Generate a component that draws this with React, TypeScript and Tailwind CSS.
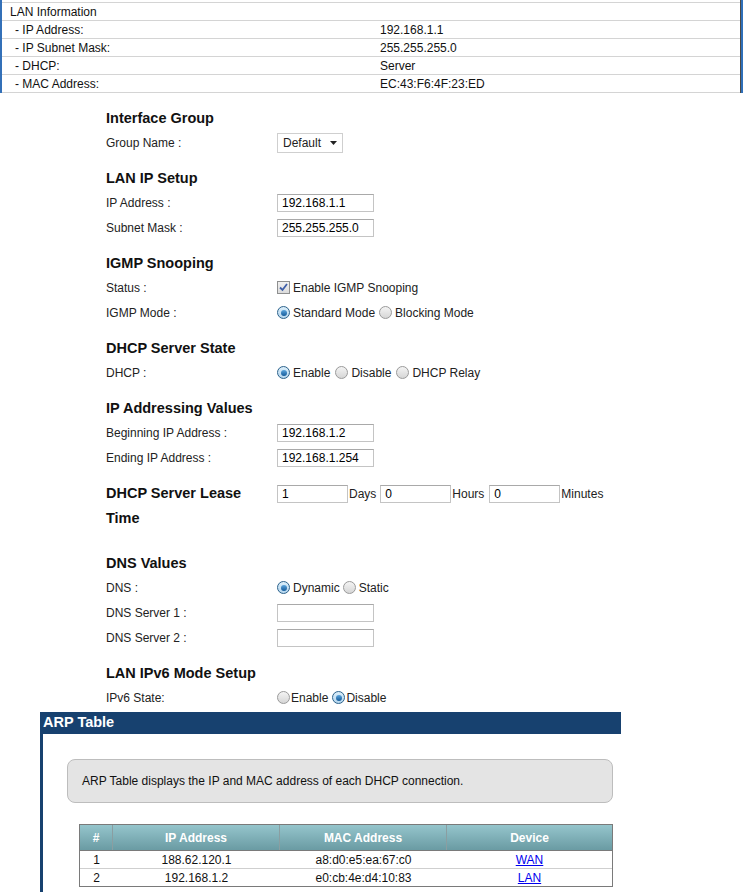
import React from 'react';

const font = { fontFamily: '"Liberation Sans", Arial, sans-serif' };

const info = [
  ['- IP Address:', '192.168.1.1'],
  ['- IP Subnet Mask:', '255.255.255.0'],
  ['- DHCP:', 'Server'],
  ['- MAC Address:', 'EC:43:F6:4F:23:ED'],
];

const Radio: React.FC<{ on?: boolean }> = ({ on }) => (
  <span
    className={`inline-flex w-[13px] h-[13px] rounded-full border items-center justify-center shrink-0 ${
      on ? 'border-[#2c628b] bg-gradient-to-b from-[#dbeefa] to-[#b5d6ee]' : 'border-[#9a9a9a] bg-gradient-to-b from-[#f4f4f4] to-[#d6d6d6]'
    }`}
  >
    {on && <span className="w-[6px] h-[6px] rounded-full bg-gradient-to-b from-[#5aa4dc] to-[#135b9a]" />}
  </span>
);

const Check: React.FC = () => (
  <span className="inline-flex w-[13px] h-[13px] border border-[#8e8f8f] bg-gradient-to-b from-[#f0f0f0] to-[#dcdcdc] items-center justify-center shrink-0">
    <svg width="9" height="9" viewBox="0 0 9 9">
      <path d="M1 4.5 L3.5 7 L8 1" fill="none" stroke="#3f5fa8" strokeWidth="1.8" />
    </svg>
  </span>
);

const Field: React.FC<{ value?: string; w?: string }> = ({ value = '', w = 'w-[97px]' }) => (
  <div className={`${w} h-[18px] border border-[#c4c4c4] border-t-[#a9a9a9] bg-white px-[4px] flex items-center text-[12px] text-black leading-none`}>
    {value}
  </div>
);

const Heading: React.FC<{ children: React.ReactNode; className?: string }> = ({ children, className = '' }) => (
  <div className={`h-[24px] pt-[2px] flex items-center text-[14.5px] font-bold text-[#111] ${className}`}>{children}</div>
);

const Row: React.FC<{ label: string; children?: React.ReactNode }> = ({ label, children }) => (
  <div className="h-[25px] flex items-center text-[12px] text-[#222]">
    <div className="w-[171px] shrink-0">{label}</div>
    <div className="flex items-center">{children}</div>
  </div>
);

export default function App() {
  return (
    <div className="w-[743px] h-[892px] overflow-hidden bg-white text-[12px]" style={font}>
      {/* LAN information */}
      <div className="pt-[2px] border-l-[2px] border-l-[#3370b8] flex">
        <div className="flex-1 border-b border-[#d4d4d4]">
          <div className="h-[18px] border-t border-[#d4d4d4] flex items-center pl-[8px] text-[#111]">LAN Information</div>
          {info.map(([k, v]) => (
            <div key={k} className="h-[18px] border-t border-[#d4d4d4] flex items-center text-[#111]">
              <div className="w-[378px] pl-[13px]">{k}</div>
              <div>{v}</div>
            </div>
          ))}
        </div>
        <div className="w-[1px] bg-[#4a4a4a] -mt-[2px]" />
        <div className="w-[2px] bg-[#2f6fb9] -mt-[2px]" />
      </div>

      {/* form */}
      <div className="pl-[106px] mt-[13px]">
        <Heading>Interface Group</Heading>
        <Row label="Group Name :">
          <div className="w-[66px] h-[20px] border border-[#cfcfcf] bg-white flex items-center pl-[5px] pr-[5px] justify-between">
            <span>Default</span>
            <svg width="7" height="4" viewBox="0 0 7 4"><path d="M0 0 H7 L3.5 4 Z" fill="#222" /></svg>
          </div>
        </Row>

        <Heading className="mt-[11px]">LAN IP Setup</Heading>
        <Row label="IP Address :"><Field value="192.168.1.1" /></Row>
        <Row label="Subnet Mask :"><Field value="255.255.255.0" /></Row>

        <Heading className="mt-[11px]">IGMP Snooping</Heading>
        <Row label="Status :">
          <Check />
          <span className="ml-[3px]">Enable IGMP Snooping</span>
        </Row>
        <Row label="IGMP Mode :">
          <Radio on />
          <span className="ml-[3px] mr-[4px]">Standard Mode</span>
          <Radio />
          <span className="ml-[3px]">Blocking Mode</span>
        </Row>

        <Heading className="mt-[11px]">DHCP Server State</Heading>
        <Row label="DHCP :">
          <Radio on />
          <span className="ml-[3px] mr-[5px]">Enable</span>
          <Radio />
          <span className="ml-[3px] mr-[5px]">Disable</span>
          <Radio />
          <span className="ml-[3px]">DHCP Relay</span>
        </Row>

        <Heading className="mt-[11px]">IP Addressing Values</Heading>
        <Row label="Beginning IP Address :"><Field value="192.168.1.2" /></Row>
        <Row label="Ending IP Address :"><Field value="192.168.1.254" /></Row>

        <div className="mt-[11px] flex items-start">
          <div className="w-[171px] shrink-0 text-[14.5px] font-bold leading-[25px] text-[#111] pr-[20px]">
            DHCP Server Lease Time
          </div>
          <div className="h-[25px] flex items-center text-[#222]">
            <Field value="1" w="w-[71px]" />
            <span className="ml-[1px] mr-[4px]">Days</span>
            <Field value="0" w="w-[71px]" />
            <span className="ml-[1px] mr-[5px]">Hours</span>
            <Field value="0" w="w-[71px]" />
            <span className="ml-[1px]">Minutes</span>
          </div>
        </div>

        <Heading className="mt-[20px]">DNS Values</Heading>
        <Row label="DNS :">
          <Radio on />
          <span className="ml-[3px] mr-[3px]">Dynamic</span>
          <Radio />
          <span className="ml-[3px]">Static</span>
        </Row>
        <Row label="DNS Server 1 :"><Field /></Row>
        <Row label="DNS Server 2 :"><Field /></Row>

        <Heading className="mt-[11px]">LAN IPv6 Mode Setup</Heading>
        <Row label="IPv6 State:">
          <Radio />
          <span className="ml-[1px] mr-[4px]">Enable</span>
          <Radio on />
          <span className="ml-[1px]">Disable</span>
        </Row>
      </div>

      {/* ARP table */}
      <div className="ml-[40px] mt-[2px] w-[581px] border-l-[3px] border-[#17416f] pb-[20px]">
        <div className="h-[22px] bg-[#17416f] flex items-center text-white font-bold text-[14.5px] -ml-[3px] pl-[3px]">ARP Table</div>
        <div className="mt-[25px] ml-[24px] mr-[8px] h-[44px] rounded-[8px] border border-[#bdbdbd] bg-[#e4e4e4] flex items-center pl-[14px] text-[#111]">
          ARP Table displays the IP and MAC address of each DHCP connection.
        </div>
        <div className="mt-[21px] ml-[36px] mr-[8px] border border-[#7a7a7a]">
          <div className="h-[25px] flex bg-gradient-to-b from-[#95c5cc] to-[#6a9ba3] text-white font-bold">
            <div className="w-[33px] flex items-center justify-center border-r border-[#8a9ea1]">#</div>
            <div className="w-[167px] flex items-center justify-center border-r border-[#8a9ea1]">IP Address</div>
            <div className="w-[167px] flex items-center justify-center border-r border-[#8a9ea1]">MAC Address</div>
            <div className="flex-1 flex items-center justify-center">Device</div>
          </div>
          {[
            ['1', '188.62.120.1', 'a8:d0:e5:ea:67:c0', 'WAN'],
            ['2', '192.168.1.2', 'e0:cb:4e:d4:10:83', 'LAN'],
          ].map((r, i) => (
            <div key={r[0]} className={`h-[18px] flex text-[#111] ${i === 0 ? 'border-t border-[#7a7a7a]' : 'border-t border-[#cfcfcf]'}`}>
              <div className="w-[33px] flex items-center justify-center">{r[0]}</div>
              <div className="w-[167px] flex items-center justify-center">{r[1]}</div>
              <div className="w-[167px] flex items-center justify-center">{r[2]}</div>
              <div className="flex-1 flex items-center justify-center">
                <a href="#" className="text-[#0000ee] underline">{r[3]}</a>
              </div>
            </div>
          ))}
        </div>
      </div>
    </div>
  );
}
